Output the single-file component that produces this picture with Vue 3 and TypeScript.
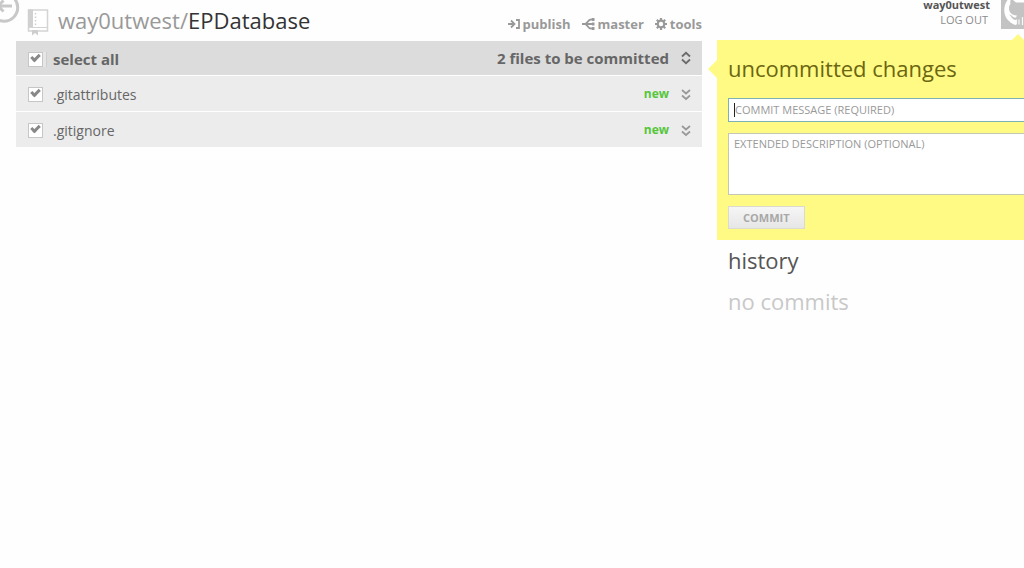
<script setup lang="ts">
import { ref, computed } from 'vue'

interface ChangedFile {
  name: string
  status: string
  checked: boolean
}

const files = ref<ChangedFile[]>([
  { name: '.gitattributes', status: 'new', checked: true },
  { name: '.gitignore', status: 'new', checked: true },
])
const summary = ref('')
const description = ref('')

const selectedCount = computed(() => files.value.filter((f) => f.checked).length)
const allSelected = computed({
  get: () => files.value.every((f) => f.checked),
  set: (value: boolean) => files.value.forEach((f) => (f.checked = value)),
})
</script>

<template>
  <div class="page">
    <button class="back" type="button" aria-label="Back">
      <svg width="20" height="23" viewBox="0 0 20 23" fill="none" stroke="#c8c8c8">
        <circle cx="4" cy="7.500" r="13.700" stroke-width="3" />
        <path d="M12 6H-3M3.500 0.500L-2 6L3.500 11.500" stroke-width="3" />
      </svg>
    </button>

    <main class="changes">
      <header class="repo-bar">
        <svg class="repo-icon" width="22" height="28" viewBox="0 0 22 28">
          <path d="M1.500 2h19v21h-19z" fill="#fff" stroke="#d4d4d4" stroke-width="1.500" />
          <path d="M1 1.500h5V19H1z" fill="#d0d0d0" />
          <path d="M1 19.500h20" stroke="#d4d4d4" />
          <path d="M8.500 5v13" stroke="#cfcfcf" stroke-width="1.500" stroke-dasharray="1.500 2" />
          <path d="M5 22h6v5.500l-3-2.500L5 27.500z" fill="#cecece" />
        </svg>
        <h1 class="repo-name"><span class="owner">way0utwest/</span>EPDatabase</h1>
        <nav class="actions">
          <button type="button">
            <svg width="12" height="12" viewBox="0 0 12 12" fill="none" stroke="#999" stroke-width="1.800">
              <path d="M0 6h6M3 2.500L6.500 6L3 9.500M8 2h3v8H8" />
            </svg>
            publish
          </button>
          <button type="button">
            <svg width="13" height="14" viewBox="0 0 13 14" fill="none" stroke="#999" stroke-width="1.800">
              <path d="M0 7h11M3 7C6 6.500 5.500 2.500 9 2.500h2M3 7C6 7.500 5.500 11.500 9 11.500h2" />
              <path d="M10 1h2.500v3H10zM10 5.500h2.500v3H10zM10 10h2.500v3H10z" fill="#999" stroke="none" />
            </svg>
            master
          </button>
          <button type="button">
            <svg width="12" height="12" viewBox="0 0 12 12" fill="none" stroke="#999">
              <circle cx="6" cy="6" r="3.300" stroke-width="2.200" />
              <path d="M6 0v2.500M6 9.500V12M0 6h2.500M9.500 6H12M1.800 1.800l1.700 1.700M8.500 8.500l1.700 1.700M10.200 1.800L8.500 3.500M3.500 8.500l-1.700 1.700" stroke-width="2.200" />
            </svg>
            tools
          </button>
        </nav>
      </header>

      <section class="files">
        <div class="row head">
          <label>
            <input v-model="allSelected" type="checkbox" />
            <span>select all</span>
          </label>
          <span class="count">{{ selectedCount }} files to be committed</span>
          <button class="toggle" type="button" aria-label="Expand all">
            <svg width="10" height="14" viewBox="0 0 10 14" fill="none" stroke="#6a6a6a" stroke-width="1.800">
              <path d="M1 5.500L5 1.800L9 5.500M1 8.500L5 12.200L9 8.500" />
            </svg>
          </button>
        </div>
        <div v-for="file in files" :key="file.name" class="row">
          <label>
            <input v-model="file.checked" type="checkbox" />
            <span>{{ file.name }}</span>
          </label>
          <span class="status">{{ file.status }}</span>
          <button class="toggle" type="button" :aria-label="'Show ' + file.name">
            <svg width="10" height="14" viewBox="0 0 10 14" fill="none" stroke="#999" stroke-width="1.700">
              <path d="M1 3L5 6.500L9 3M1 8.500L5 12L9 8.500" />
            </svg>
          </button>
        </div>
      </section>
    </main>

    <aside class="side">
      <header class="account">
        <div class="who">
          <strong>way0utwest</strong>
          <a href="#">LOG OUT</a>
        </div>
        <svg class="avatar" width="23" height="29" viewBox="0 0 23 29">
          <path d="M0 0h23v29H0z" fill="#c3c3c3" />
          <path d="M6.500 0C2 6 2 16 8 21C10 23 12 24.500 15 25V20C12 20 11 18 10 16.500C9.500 15.500 8 15 8.500 14.500C11 14.500 11 18 15 17.500L16 15.500C10 15 8 12 8 8C8 6 8.500 5 9.500 4C9 2.500 9.500 1 9.500 0z" fill="#fff" />
          <path d="M12 0L15 2.500H23V0z" fill="#fff" />
          <path d="M15.500 19.500v5M18 19.500v5M21.500 17v8" stroke="#f8f8f8" stroke-width="1.200" />
        </svg>
      </header>

      <form class="commit-panel" @submit.prevent>
        <h2>uncommitted changes</h2>
        <div class="field">
          <input v-model="summary" type="text" aria-label="Commit message" placeholder="COMMIT MESSAGE (REQUIRED)" />
        </div>
        <textarea v-model="description" aria-label="Extended description" placeholder="EXTENDED DESCRIPTION (OPTIONAL)"></textarea>
        <button class="commit" type="submit" :disabled="!summary">COMMIT</button>
      </form>

      <section class="history">
        <h2>history</h2>
        <p>no commits</p>
      </section>
    </aside>
  </div>
</template>

<style>
body {
  margin: 0;
  background: #fefefe;
}
</style>

<style scoped>
.page {
  position: relative;
  display: grid;
  grid-template-columns: minmax(0, 1fr) 307px;
  column-gap: 15px;
  padding-left: 16px;
  min-height: 100vh;
  box-sizing: border-box;
  overflow: hidden;
  font-family: "Open Sans", "Noto Sans", sans-serif;
  color: #666;
}

h1,
h2,
p {
  margin: 0;
  font-weight: 400;
}

button {
  font-family: inherit;
  cursor: pointer;
}

svg {
  display: block;
  flex: none;
}

.back,
.toggle,
.actions button {
  padding: 0;
  border: 0;
  background: none;
}

.back {
  position: absolute;
  top: 0;
  left: 0;
}

.repo-bar {
  display: flex;
  align-items: center;
  height: 41px;
  padding-left: 11px;
}

.repo-icon {
  margin-top: 2px;
}

.repo-name {
  flex: 1;
  margin-left: 9px;
  font-size: 22px;
  line-height: 32px;
  padding-bottom: 2px;
  color: #333;
  white-space: nowrap;
}

.owner {
  color: #999;
}

.actions {
  display: flex;
  gap: 11px;
  padding-top: 6px;
}

.actions button {
  display: flex;
  align-items: center;
  gap: 3px;
  font-size: 13px;
  line-height: 18px;
  font-weight: 700;
  color: #999;
}

.files {
  display: flex;
  flex-direction: column;
  gap: 1px;
}

.row {
  display: flex;
  align-items: center;
  height: 35px;
  padding: 0 11px 0 12px;
  background: #ececec;
  font-size: 14px;
}

.row.head {
  height: 34px;
  background: #dcdcdc;
  font-weight: 700;
}

.row label {
  display: flex;
  flex: 1;
  align-items: center;
  gap: 10px;
}

.row label span {
  padding-top: 2px;
}

.row input {
  position: relative;
  appearance: none;
  width: 15px;
  height: 15px;
  margin: 2px 0 0;
  border: 1px solid #c6c6c6;
  background: #fff;
}

.row.head input {
  box-shadow: 3px 0 #e6e6e6, 4px 0 #cfcfcf;
}

.row input:checked::after {
  content: "";
  position: absolute;
  left: 2px;
  top: 2px;
  width: 6px;
  height: 3px;
  border: solid #888;
  border-width: 0 0 3px 3px;
  transform: translate(0, -1px) rotate(-45deg);
}

.row.head label,
.count {
  font-size: 15px;
}

.status {
  font-size: 12px;
  font-weight: 700;
  color: #55c63a;
}

.toggle {
  margin-left: 12px;
}

.account {
  display: flex;
  justify-content: flex-end;
  gap: 11px;
  height: 40px;
}

.who {
  display: flex;
  flex-direction: column;
  align-items: flex-end;
  font-size: 11px;
}

.who strong {
  line-height: 10px;
  color: #555;
}

.who a {
  padding-right: 2px;
  line-height: 20px;
  color: #8c8c8c;
  text-decoration: none;
}

.commit-panel {
  position: relative;
  display: flex;
  flex-direction: column;
  align-items: stretch;
  padding: 12px 0 11px 11px;
  background: #fffa84;
}

.commit-panel::before,
.commit-panel::after {
  content: "";
  position: absolute;
  border: 9px solid transparent;
}

.commit-panel::before {
  left: -18px;
  top: 20px;
  border-right-color: #fffa84;
}

.commit-panel::after {
  right: -3px;
  top: -15px;
  border-bottom-color: #fffa84;
}

h2 {
  font-size: 22px;
  line-height: 32px;
}

.commit-panel h2 {
  color: #6b6611;
}

.field {
  position: relative;
  margin-top: 14px;
}

.field::before {
  content: "";
  position: absolute;
  left: 6px;
  top: 5px;
  width: 1px;
  height: 14px;
  background: #222;
}

.field input,
textarea {
  display: block;
  width: 100%;
  box-sizing: border-box;
  margin: 0;
  border: 1px solid #c6c6b4;
  border-right: 0;
  border-radius: 0;
  outline: 0;
  background: #fff;
  font-family: inherit;
  font-size: 11px;
  line-height: 16px;
  color: #444;
  resize: none;
}

.field input {
  height: 24px;
  padding: 0 6px 2px;
  border-color: #7fb0b4;
}

textarea {
  height: 62px;
  margin-top: 11px;
  padding: 2px 5px;
}

input::placeholder,
textarea::placeholder {
  color: #999;
  opacity: 1;
}

.commit {
  align-self: flex-start;
  margin-top: 11px;
  padding: 0 14px 1px;
  height: 23px;
  border: 1px solid #dadad0;
  background: linear-gradient(#f6f6f6, #e6e6e6);
  font-size: 11px;
  font-weight: 700;
  color: #a8a8a8;
}

.history {
  padding: 4px 0 0 11px;
}

.history h2 {
  color: #555;
}

.history p {
  margin-top: 9px;
  font-size: 22px;
  line-height: 32px;
  color: #c8c8c8;
}
</style>
